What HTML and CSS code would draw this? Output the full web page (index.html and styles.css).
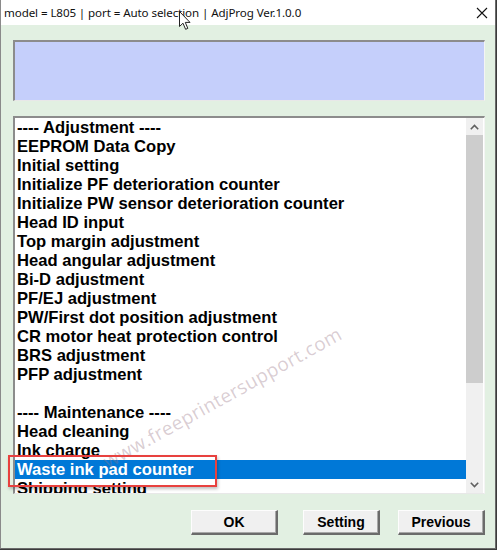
FILE: index.html
```html
<!DOCTYPE html>
<html>
<head>
<meta charset="utf-8">
<link rel="stylesheet" href="styles.css">
</head>
<body>
<div class="window">
  <div class="titlebar">
    <span class="title">model = L805 | port = Auto selection | AdjProg Ver.1.0.0</span>
    <svg class="close" width="12" height="12" viewBox="0 0 12 12"><path d="M1 1 L11 11 M11 1 L1 11" stroke="#111" stroke-width="1.1" fill="none"/></svg>
  </div>
  <div class="client">
    <div class="panel"></div>
    <div class="listbox">
      <div class="items">
        <div class="item">---- Adjustment ----</div>
        <div class="item">EEPROM Data Copy</div>
        <div class="item">Initial setting</div>
        <div class="item">Initialize PF deterioration counter</div>
        <div class="item">Initialize PW sensor deterioration counter</div>
        <div class="item">Head ID input</div>
        <div class="item">Top margin adjustment</div>
        <div class="item">Head angular adjustment</div>
        <div class="item">Bi-D adjustment</div>
        <div class="item">PF/EJ adjustment</div>
        <div class="item">PW/First dot position adjustment</div>
        <div class="item">CR motor heat protection control</div>
        <div class="item">BRS adjustment</div>
        <div class="item">PFP adjustment</div>
        <div class="item"></div>
        <div class="item">---- Maintenance ----</div>
        <div class="item">Head cleaning</div>
        <div class="item">Ink charge</div>
        <div class="item selected">Waste ink pad counter</div>
        <div class="item">Shipping setting</div>
      </div>
      <div class="scrollbar">
        <div class="arrow"><svg width="9" height="6" viewBox="0 0 9 6"><path d="M0.8 5.2 L4.5 1.5 L8.2 5.2" stroke="#606060" stroke-width="1.6" fill="none"/></svg></div>
        <div class="thumb"></div>
        <div class="track"></div>
        <div class="arrow"><svg width="9" height="6" viewBox="0 0 9 6"><path d="M0.8 0.8 L4.5 4.5 L8.2 0.8" stroke="#606060" stroke-width="1.6" fill="none"/></svg></div>
      </div>
      <div class="watermark">www.freeprintersupport.com</div>
    </div>
    <div class="buttons">
      <button class="btn btn-ok">OK</button>
      <button class="btn btn-setting">Setting</button>
      <button class="btn btn-prev">Previous</button>
    </div>
  </div>
  <div class="highlight-box"></div>
  <svg class="cursor" width="13" height="20" viewBox="0 0 13 20"><path d="M0.5 0.5 L0.5 15.5 L4 12.2 L6.6 18.3 L8.8 17.4 L6.3 11.4 L11 11.4 Z" fill="#fff" stroke="#222" stroke-width="1" stroke-linejoin="round"/></svg>
</div>
</body>
</html>
```
FILE: styles.css
```css
html, body {
  margin: 0;
  padding: 0;
}
body {
  background: #3b3b3b;
  width: 497px;
  height: 550px;
  overflow: hidden;
}
.window {
  position: relative;
  width: 494px;
  height: 548px;
  border-left: 1px solid #8a8a8a;
  border-right: 1px solid #6a6a6a;
  border-bottom: 1px solid #6a6a6a;
  background: #e2f0e2;
  display: flex;
  flex-direction: column;
}
.titlebar {
  height: 25px;
  background: #fff;
  display: flex;
  align-items: center;
  justify-content: space-between;
  padding: 0 7px 0 3px;
}
.title {
  font-family: "Noto Sans", "Open Sans", sans-serif;
  font-size: 11.6px;
  color: #111;
  letter-spacing: -0.1px;
  margin-top: -1px;
}
.close {
  display: block;
  margin-top: 1px;
}
.client {
  flex: 1;
  padding: 15px 10px 0 12px;
  display: flex;
  flex-direction: column;
}
.panel {
  height: 58px;
  background: #c5cffb;
  border-top: 2px solid #8c8c8c;
  border-left: 2px solid #8c8c8c;
  border-right: 1px solid #f4f4f4;
  border-bottom: 1px solid #e8e8e8;
}
.listbox {
  position: relative;
  margin-top: 15px;
  height: 375px;
  background: #fff;
  border-top: 2px solid #8c8c8c;
  border-left: 2px solid #8c8c8c;
  border-right: 1px solid #f4f4f4;
  border-bottom: 1px solid #e8e8e8;
  display: flex;
  overflow: hidden;
}
.items {
  flex: 1;
  overflow: hidden;
}
.item {
  height: 19px;
  line-height: 19px;
  padding-left: 2px;
  font-family: "Liberation Sans", Arial, sans-serif;
  font-weight: bold;
  font-size: 16.6px;
  color: #000;
  white-space: nowrap;
}
.item.selected {
  background: #0078d7;
  color: #fff;
}
.scrollbar {
  width: 17px;
  margin-right: 1px;
  background: #f0f0f0;
  display: flex;
  flex-direction: column;
}
.arrow {
  height: 17px;
  display: flex;
  align-items: center;
  justify-content: center;
}
.arrow svg {
  display: block;
}
.thumb {
  height: 248px;
  background: #cdcdcd;
}
.track {
  flex: 1;
}
.watermark {
  position: absolute;
  left: 96px;
  top: 330px;
  font-family: "Open Sans", "DejaVu Sans", sans-serif;
  font-size: 19px;
  color: rgba(150, 115, 130, 0.36);
  transform: rotate(-29deg);
  transform-origin: left bottom;
  white-space: nowrap;
  letter-spacing: 0.4px;
  pointer-events: none;
}
.buttons {
  margin-top: 16px;
  display: flex;
  justify-content: flex-end;
  gap: 25px;
}
.btn {
  height: 25px;
  background: #f0f0f0;
  border-top: 1px solid #fdfdfd;
  border-left: 1px solid #fdfdfd;
  border-right: 2px solid #6b6b6b;
  border-bottom: 2px solid #6b6b6b;
  font-family: "Liberation Sans", Arial, sans-serif;
  font-weight: bold;
  font-size: 14px;
  color: #000;
  padding: 0;
  box-shadow: inset -1px -1px 0 #a8a8a8;
}
.btn-ok { width: 87px; }
.btn-setting { width: 77px; }
.btn-prev { width: 87px; margin-left: -7px; }
.highlight-box {
  position: absolute;
  left: 7px;
  top: 455px;
  width: 205px;
  height: 28px;
  border: 2px solid #e8413f;
  box-shadow: 1px 2px 3px rgba(0, 0, 0, 0.25);
  pointer-events: none;
}
.cursor {
  position: absolute;
  left: 178px;
  top: 11px;
}
```
